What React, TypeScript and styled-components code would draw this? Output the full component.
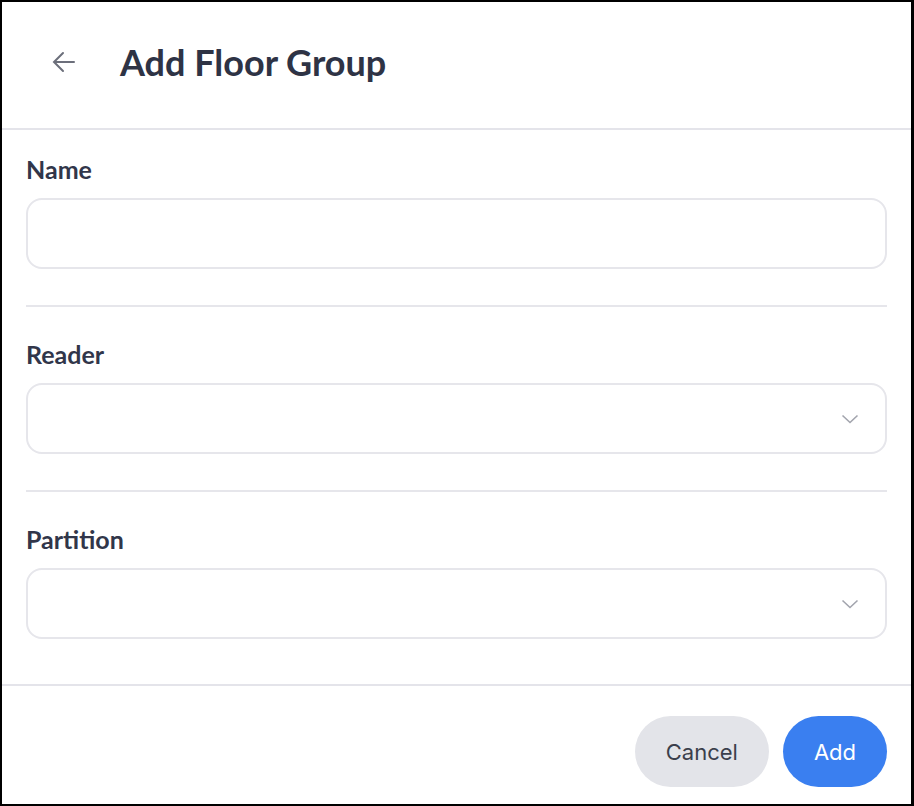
import styled, { createGlobalStyle } from 'styled-components';

const GlobalStyle = createGlobalStyle`
  html, body { margin: 0; padding: 0; background: #fff; }
  * { box-sizing: border-box; }
`;

const Frame = styled.div`
  width: 914px;
  height: 806px;
  border: 2px solid #000;
  border-right-width: 3px;
  background: #fff;
  display: flex;
  flex-direction: column;
  font-family: Lato, 'Noto Sans', sans-serif;
  color: #2e3345;
`;

const Header = styled.header`
  height: 128px;
  display: flex;
  align-items: center;
  gap: 43px;
  padding: 0 50px 6px 49px;
  border-bottom: 2px solid #e4e4ea;
`;

const BackButton = styled.button`
  border: 0;
  background: none;
  padding: 0;
  width: 26px;
  height: 26px;
  display: flex;
  align-items: center;
  justify-content: center;
  color: #6c6f7b;
  cursor: pointer;
`;

const Title = styled.h1`
  margin: 0;
  font-size: 36px;
  line-height: 40px;
  font-weight: 700;
  color: #2e3345;
`;

const Body = styled.div`
  flex: 1;
  padding: 25px 24px 0 24px;
  display: flex;
  flex-direction: column;
`;

const Field = styled.div`
  display: flex;
  flex-direction: column;
  gap: 15px;
`;

const Label = styled.label`
  font-size: 25px;
  line-height: 28px;
  font-weight: 700;
  color: #31364a;
`;

const Box = styled.div`
  position: relative;
  height: 71px;
  border: 2px solid #e6e6eb;
  border-radius: 16px;
  background: #fff;
  display: flex;
  align-items: center;
  justify-content: flex-end;
  padding: 0 26px;
`;

const TextInput = styled.input`
  flex: 1;
  height: 100%;
  border: 0;
  outline: none;
  background: transparent;
  font: inherit;
  font-size: 20px;
`;

const Chevron = styled.span`
  display: flex;
  color: #a2a4ad;
`;

const Divider = styled.hr`
  border: 0;
  height: 2px;
  background: #e6e6eb;
  margin: 36px 0 33px;
`;

const Footer = styled.footer`
  border-top: 2px solid #e4e4ea;
  display: flex;
  justify-content: flex-end;
  gap: 14px;
  padding: 30px 24px 0;
  height: 120px;
`;

const Pill = styled.button<{ $primary?: boolean }>`
  height: 71px;
  border: 0;
  border-radius: 36px;
  padding: 0 31px;
  font-family: Inter, 'Noto Sans', sans-serif;
  font-size: 22px;
  background: ${(p) => (p.$primary ? '#3a7ff0' : '#e3e4e9')};
  color: ${(p) => (p.$primary ? '#fff' : '#3b3f4c')};
  cursor: pointer;
`;

const SelectBox = () => (
  <Box>
    <Chevron>
      <svg width="18" height="10" viewBox="0 0 18 10" fill="none" stroke="currentColor" strokeWidth={1.6}>
        <path d="M1.5 1.5l7.5 7 7.5-7" />
      </svg>
    </Chevron>
  </Box>
);

export default function App() {
  return (
    <>
      <GlobalStyle />
      <Frame>
        <Header>
          <BackButton aria-label="Back">
            <svg width="24" height="22" viewBox="0 0 24 22" fill="none" stroke="currentColor" strokeWidth={2} strokeLinecap="round">
              <path d="M22 11H3" />
              <path d="M11 2l-9 9 9 9" />
            </svg>
          </BackButton>
          <Title>Add Floor Group</Title>
        </Header>
        <Body>
          <Field>
            <Label>Name</Label>
            <Box>
              <TextInput />
            </Box>
          </Field>
          <Divider />
          <Field>
            <Label>Reader</Label>
            <SelectBox />
          </Field>
          <Divider />
          <Field>
            <Label>Partition</Label>
            <SelectBox />
          </Field>
        </Body>
        <Footer>
          <Pill>Cancel</Pill>
          <Pill $primary>Add</Pill>
        </Footer>
      </Frame>
    </>
  );
}
